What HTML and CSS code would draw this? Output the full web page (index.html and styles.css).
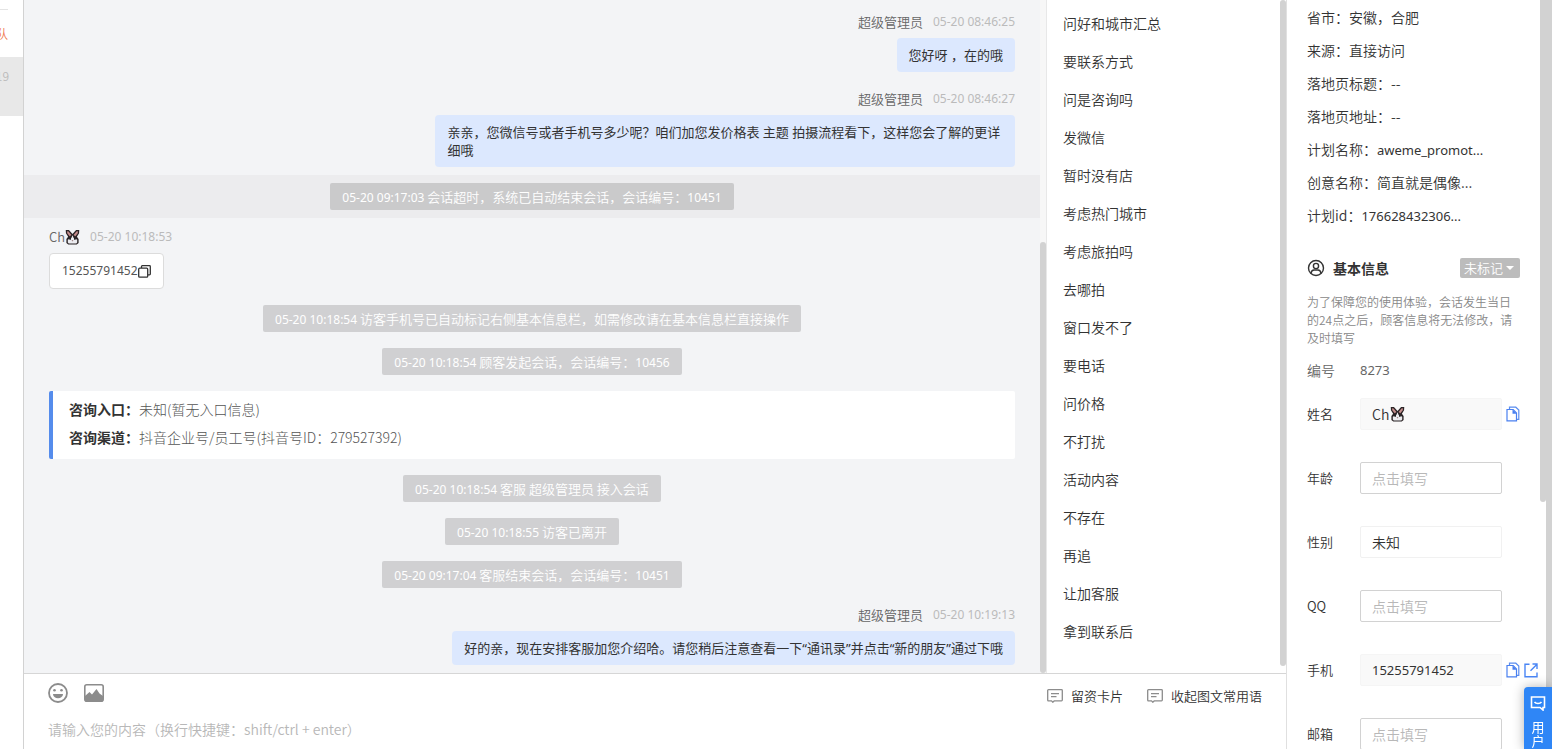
FILE: index.html
```html
<!DOCTYPE html>
<html lang="zh-CN">
<head>
<meta charset="utf-8">
<title>客服会话</title>
<link rel="stylesheet" href="styles.css">
</head>
<body>
<svg class="defs" aria-hidden="true">
  <symbol id="rabbit" viewBox="0 0 16 16">
    <path d="M.8.600h3.400L8 4.800 11.800.600h3.400L15 4l-2.300 3.600L14.500 10v4.500L12.500 16h-9L1.500 14.500V10l1.800-2.400L1 4z" fill="#2b2426"/>
    <path d="M2.200 1.800l1.600.2L6.800 5.800 5 7.200 2.400 4zM13.800 1.800l-1.600.2-3 3.800L11 7.200 13.600 4z" fill="#c48d8c"/>
    <path d="M8 6l1.200 3 3.800 1.800v3L12 15H4l-1-1.200v-3L6.800 9z" fill="#ececf0"/>
    <path d="M4.600 8.800h1.800v2H4.600zM9.600 8.800h1.800v2H9.600z" fill="#222"/>
    <path d="M7 11.500h2L8 12.800z" fill="#8a6565"/>
  </symbol>
  <symbol id="copy" viewBox="0 0 14 16">
    <path d="M3.500 3V1.200h6.300L12.800 4v9.300h-2" fill="none" stroke="#5b8def" stroke-width="1.200"/>
    <path d="M1 3.500h6.200L10.500 7v7.800H1z" fill="none" stroke="#4a80f0" stroke-width="1.200"/>
    <path d="M6.500 3.500L10.800 7.800H6.500z" fill="#4a80f0"/>
  </symbol>
  <symbol id="card" viewBox="0 0 16 14">
    <path d="M1.500.7h13a.8.8 0 0 1 .8.8v9.600a.8.8 0 0 1-.8.8H7.200L5.800 13.200 4.500 11.900h-3a.8.8 0 0 1-.8-.8V1.500a.8.8 0 0 1 .8-.8z" fill="none" stroke="#8c8c8c" stroke-width="1.300"/>
    <path d="M4 4.700h8M4 7.700h5.500" stroke="#8c8c8c" stroke-width="1.200"/>
  </symbol>
</svg>
<div class="app">
  <aside class="sessions">
    <div class="session-head"></div>
    <div class="session-team">队</div>
    <div class="session-active">19</div>
  </aside>

  <main class="workspace">
    <div class="upper">
      <section class="chat">
        <div class="messages">
          <article class="msg mine">
            <header class="meta"><span>超级管理员</span><time>05-20 08:46:25</time></header>
            <p class="bubble">您好呀 ，在的哦</p>
          </article>
          <article class="msg mine">
            <header class="meta"><span>超级管理员</span><time>05-20 08:46:27</time></header>
            <p class="bubble">亲亲，您微信号或者手机号多少呢？咱们加您发价格表 主题 拍摄流程看下，这样您会了解的更详细哦</p>
          </article>
          <div class="notice band"><p><time>05-20 09:17:03</time> 会话超时，系统已自动结束会话，会话编号：<b>10451</b></p></div>
          <article class="msg">
            <header class="meta"><span class="who">Ch<svg class="rabbit"><use href="#rabbit"/></svg></span><time>05-20 10:18:53</time></header>
            <p class="bubble phone">15255791452<button class="icon-btn" aria-label="复制"><svg width="13" height="13" viewBox="0 0 13 13" fill="none" stroke="#333" stroke-width="1.300"><rect x=".7" y="3.200" width="9" height="9" rx="1"/><path d="M3.500 3V1.500a.8.8 0 0 1 .8-.8h7.200a.8.8 0 0 1 .8.8V9a.8.8 0 0 1-.8.800H10"/></svg></button></p>
          </article>
          <div class="notice"><p><time>05-20 10:18:54</time> 访客手机号已自动标记右侧基本信息栏，如需修改请在基本信息栏直接操作</p></div>
          <div class="notice"><p><time>05-20 10:18:54</time> 顾客发起会话，会话编号：<b>10456</b></p></div>
          <div class="entry">
            <dl>
              <div><dt>咨询入口：</dt><dd>未知(暂无入口信息)</dd></div>
              <div><dt>咨询渠道：</dt><dd>抖音企业号/员工号(抖音号ID：279527392)</dd></div>
            </dl>
          </div>
          <div class="notice"><p><time>05-20 10:18:54</time> 客服 超级管理员 接入会话</p></div>
          <div class="notice"><p><time>05-20 10:18:55</time> 访客已离开</p></div>
          <div class="notice"><p><time>05-20 09:17:04</time> 客服结束会话，会话编号：<b>10451</b></p></div>
          <article class="msg mine">
            <header class="meta"><span>超级管理员</span><time>05-20 10:19:13</time></header>
            <p class="bubble">好的亲，现在安排客服加您介绍哈。请您稍后注意查看一下“通讯录”并点击“新的朋友”通过下哦</p>
          </article>
        </div>
        <div class="track chat-track"><div class="thumb"></div></div>
      </section>
      <section class="phrases">
        <ul>
          <li>问好和城市汇总</li><li>要联系方式</li><li>问是咨询吗</li><li>发微信</li><li>暂时没有店</li><li>考虑热门城市</li><li>考虑旅拍吗</li><li>去哪拍</li><li>窗口发不了</li><li>要电话</li><li>问价格</li><li>不打扰</li><li>活动内容</li><li>不存在</li><li>再追</li><li>让加客服</li><li>拿到联系后</li>
        </ul>
        <div class="track phrase-track"><div class="thumb"></div></div>
      </section>
    </div>
    <footer class="composer">
      <div class="toolbar">
        <button class="icon-btn" aria-label="表情"><svg width="20" height="20" viewBox="0 0 20 20"><circle cx="10" cy="10" r="9" fill="none" stroke="#8c8c8c" stroke-width="1.800"/><circle cx="6.500" cy="7.300" r="1.300" fill="#8c8c8c"/><circle cx="13.500" cy="7.300" r="1.300" fill="#8c8c8c"/><path d="M5 11h10a5 4.300 0 0 1-10 0z" fill="#8c8c8c"/></svg></button>
        <button class="icon-btn" aria-label="图片"><svg width="20" height="18" viewBox="0 0 20 18"><rect x=".8" y=".8" width="18.400" height="16.400" rx="2" fill="none" stroke="#8c8c8c" stroke-width="1.600"/><path d="M1 12l4.500-4 2.500 2.500L12.500 5l3 4.500L19 12v5H1z" fill="#8c8c8c"/></svg></button>
        <div class="actions">
          <button class="action"><svg width="16" height="14"><use href="#card"/></svg>留资卡片</button>
          <button class="action"><svg width="16" height="14"><use href="#card"/></svg>收起图文常用语</button>
        </div>
      </div>
      <textarea class="editor" aria-label="消息内容" placeholder="请输入您的内容（换行快捷键：shift/ctrl + enter）"></textarea>
    </footer>
  </main>

  <aside class="profile">
    <div class="profile-body">
      <ul class="facts">
        <li>省市：安徽，合肥</li>
        <li>来源：直接访问</li>
        <li>落地页标题：--</li>
        <li>落地页地址：--</li>
        <li>计划名称：<span class="latin">aweme_promot...</span></li>
        <li>创意名称：简直就是偶像...</li>
        <li>计划id：<span class="latin">176628432306...</span></li>
      </ul>
      <div class="section-head">
        <svg width="18" height="18" viewBox="0 0 18 18" fill="none" stroke="#333" stroke-width="1.400"><circle cx="9" cy="9" r="7.500"/><circle cx="9" cy="7" r="2.600"/><path d="M4 14.300c.3-2.300 1.500-3.300 3-3.300h4c1.500 0 2.700 1 3 3.300"/></svg>
        <h2>基本信息</h2>
        <button class="mark">未标记<i></i></button>
      </div>
      <p class="hint">为了保障您的使用体验，会话发生当日的24点之后，顾客信息将无法修改，请及时填写</p>
      <div class="serial"><span>编号</span><span class="latin">8273</span></div>
      <form class="fields">
        <div class="row"><label for="name">姓名</label><div class="control filled"><input id="name" class="short" value="Ch"><svg class="rabbit"><use href="#rabbit"/></svg></div><button type="button" class="icon-btn" aria-label="复制姓名"><svg width="14" height="16"><use href="#copy"/></svg></button></div>
        <div class="row"><label for="age">年龄</label><div class="control"><input id="age" placeholder="点击填写"></div></div>
        <div class="row"><label for="sex">性别</label><div class="control soft"><select id="sex"><option>未知</option></select></div></div>
        <div class="row"><label for="qq">QQ</label><div class="control"><input id="qq" placeholder="点击填写"></div></div>
        <div class="row"><label for="tel">手机</label><div class="control filled"><input id="tel" class="latin" value="15255791452"></div><button type="button" class="icon-btn" aria-label="复制手机"><svg width="14" height="16"><use href="#copy"/></svg></button><button type="button" class="icon-btn" aria-label="打开"><svg width="14" height="15" viewBox="0 0 14 15" fill="none" stroke="#4a86f5" stroke-width="1.400"><path d="M5.500 1.200H1v12.600h12V9.500M8.500 1H13v5M6.500 7.800L13 1.200"/></svg></button></div>
        <div class="row"><label for="mail">邮箱</label><div class="control"><input id="mail" placeholder="点击填写"></div></div>
      </form>
    </div>
    <div class="track profile-track"><div class="thumb"></div></div>
  </aside>
  <div class="page-bar"></div>
</div>
<button class="feedback"><svg width="16" height="15" viewBox="0 0 16 15" fill="none" stroke="#fff" stroke-width="1.600"><path d="M1.500 1h13v10.500h-1.500V14l-3-2.500H1.500zM4.500 6c1.500 2 5.500 2 7 0"/></svg><span>用户</span></button>
</body>
</html>
```
FILE: styles.css
```css
* { box-sizing: border-box; }
body {
  margin: 0;
  overflow: hidden;
  color: #333;
  background: #fff;
  font: 350 14px/18px "Noto Sans CJK SC", sans-serif;
}
ul, dl, dd, p, h2 { margin: 0; padding: 0; list-style: none; }
button, input, select, textarea {
  margin: 0;
  padding: 0;
  border: 0;
  outline: 0;
  background: none;
  color: inherit;
  font: inherit;
}
svg { display: block; flex: none; }
.defs { position: absolute; width: 0; height: 0; }
.app { display: flex; height: 100vh; }
.icon-btn { display: flex; flex: none; }
.latin { font-family: "Noto Sans", "Noto Sans CJK SC", sans-serif; font-size: 13px; font-weight: 400; }
.rabbit { width: 15px; height: 16px; }

/* session list edge */
.sessions {
  flex: none;
  width: 24px;
  overflow: hidden;
  border-right: 1px solid #d2d2d2;
  font-size: 12px;
}
.session-head { width: 8px; height: 10px; border-bottom: 1px solid #e4e4e4; }
.session-team, .session-active { display: flex; justify-content: flex-end; white-space: nowrap; }
.session-team { height: 47px; padding: 15px 15px 0 0; color: #f07850; }
.session-active { height: 59px; padding: 10px 14px 0 0; background: #e8e8e8; color: #bbb; }

/* conversation */
.workspace { display: flex; flex: 1; flex-direction: column; min-width: 0; }
.upper { display: flex; flex: 1; min-height: 0; }
.chat { display: flex; flex: 1; min-width: 0; background: #f3f4f6; }
.messages {
  display: flex;
  flex: 1;
  flex-direction: column;
  justify-content: flex-end;
  min-width: 0;
  overflow: hidden;
  font-size: 13px;
}
.msg { display: flex; flex-direction: column; align-items: flex-start; padding: 8px 25px; }
.msg.mine { align-items: flex-end; }
.meta { display: flex; gap: 10px; margin-bottom: 5px; color: #666; line-height: 22px; }
.meta time { color: #bbb; }
time, .notice b { font-family: "Noto Sans", sans-serif; font-size: 12px; font-weight: 400; }
.who { display: flex; align-items: center; }
.bubble {
  max-width: 60%;
  padding: 8px 12px;
  border-radius: 4px;
  background: #fff;
  font-family: "Noto Sans", "Noto Sans CJK SC", sans-serif;
  font-weight: 400;
}
.mine .bubble { background: #dce8fe; }
.phone {
  display: flex;
  align-items: center;
  border: 1px solid #dcdcdc;
  color: #555;
  font-size: 12px;
}
.notice { display: flex; justify-content: center; padding: 8px 25px; }
.notice p {
  height: 27px;
  padding: 5px 12px 4px;
  border-radius: 2px;
  background: #d0d0d2;
  color: #fff;
  white-space: nowrap;
}
.notice.band { background: #ececee; }
.notice.band p { background: #cacacb; }
.entry { padding: 8px 25px; font-size: 14px; line-height: 28px; }
.entry dl {
  padding: 4px 16px 8px;
  border-left: 4px solid #558cec;
  border-radius: 2px;
  background: #fff;
}
.entry dl div { display: flex; }
.entry dt { font-weight: 700; }
.entry dd { color: #555; font-weight: 300; }

.track { display: flex; flex: none; flex-direction: column; width: 6px; }
.thumb { border-radius: 3px; background: #d2d2d2; }
.chat-track { justify-content: flex-end; background: #f7f7f7; }
.chat-track .thumb { height: 64%; }
.phrase-track .thumb { height: 99%; }
.profile-track .thumb { height: 67%; border-radius: 0 0 3px 3px; }

.phrases { display: flex; flex: none; width: 240px; border-left: 1px solid #e8e8e8; }
.phrases ul { flex: 1; padding: 4px 16px; line-height: 38px; }

/* composer */
.composer { flex: none; height: 76px; padding: 7px 24px; border-top: 1px solid #d6d6d6; }
.toolbar { display: flex; align-items: center; gap: 16px; height: 24px; }
.actions { display: flex; gap: 24px; margin-left: auto; padding-top: 5px; }
.action { display: flex; align-items: center; gap: 8px; font-size: 13px; }
.editor { display: block; width: 100%; height: 36px; padding-top: 15px; resize: none; overflow: hidden; }
.editor::placeholder, input::placeholder { color: #b8b8b8; opacity: 1; }

/* visitor profile */
.profile { display: flex; flex: none; width: 260px; border-left: 1px solid #e0e0e0; overflow: hidden; }
.profile-body { flex: 1; min-width: 0; padding: 1px 20px 0; }
.facts { line-height: 33px; white-space: nowrap; }
.facts li { height: 33px; }
.section-head { display: flex; align-items: center; gap: 8px; margin-top: 25px; height: 22px; }
.section-head h2 { font-size: 14px; }
.mark {
  display: flex;
  align-items: center;
  gap: 3px;
  height: 20px;
  margin-left: auto;
  padding: 0 6px 0 4px;
  border-radius: 2px;
  background: #bcbcbc;
  color: #fff;
  font-size: 13px;
}
.mark i { border: 4px solid transparent; border-top-color: #fff; border-bottom: 0; }
.hint { margin-top: 14px; color: #888; font-size: 12px; }
.serial { display: flex; margin-top: 14px; color: #666; }
.serial span:first-child { width: 53px; }
.fields { display: grid; gap: 32px; margin-top: 19px; }
.row { display: flex; align-items: center; gap: 4px; height: 32px; }
.row label { flex: none; width: 49px; font-size: 13px; }
.control {
  display: flex;
  flex: none;
  align-items: center;
  width: 142px;
  height: 32px;
  padding: 0 11px;
  border: 1px solid #d2d2d2;
  border-radius: 2px;
}
.control.filled { border-color: #f5f5f5; background: #f9f9f9; }
.control.soft { border-color: #f1f1f1; }
.control input, .control select { width: 100%; min-width: 0; appearance: none; }
.control .short { width: 18px; }
.page-bar { flex: none; width: 6px; background: #d2d2d2; }

.feedback {
  position: fixed;
  right: 0;
  bottom: 0;
  display: flex;
  flex-direction: column;
  align-items: center;
  gap: 9px;
  width: 28px;
  height: 62px;
  padding-top: 9px;
  overflow: hidden;
  border-radius: 4px 0 0 0;
  background: #2f86f6;
  box-shadow: 0 0 12px rgba(0, 0, 0, .3);
  color: #fff;
  font-size: 13px;
  font-weight: 400;
  line-height: 14px;
}
.feedback span { width: 13px; }
```
